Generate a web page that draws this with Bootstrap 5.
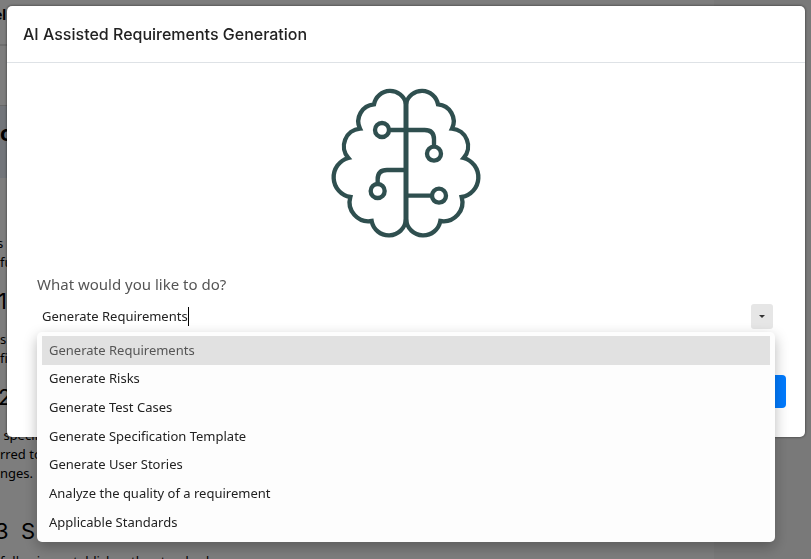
<!DOCTYPE html>
<html lang="en">
<head>
<meta charset="utf-8">
<meta name="viewport" content="width=device-width, initial-scale=1">
<title>AI Assisted Requirements Generation</title>
<link href="https://cdn.jsdelivr.net/npm/bootstrap@5.3.0/dist/css/bootstrap.min.css" rel="stylesheet">
<style>
  body { font-family: "Noto Sans", sans-serif; font-size: 13px; background: #f3f3f3; }
  .doc-page { height: 100vh; color: #000; white-space: nowrap; }
  .doc-column { width: 88%; height: 100%; background: #fbfbfb; }
  .doc-bar { height: 46px; line-height: 30px; font-family: Inter, sans-serif; font-size: 14px; text-indent: -6px; border-bottom: 2px solid #dcdcdc; }
  .doc-gap { height: 60px; border-bottom: 1px solid #d0d0d0; }
  .doc-band { height: 72px; line-height: 54px; background: #e4ebf5; font-family: Inter, sans-serif; font-size: 22px; }
  .doc-links { padding-top: 56px; line-height: 19px; text-indent: -3px; }
  .doc-title { font-family: Inter, sans-serif; font-size: 22px; font-weight: 400; line-height: 24px; margin: 17px 0; text-indent: -2px; }
  .doc-title-major { margin: 36px 0 9px; text-indent: -5px; }
  .doc-text { line-height: 19px; margin: 0; }
  .modal-backdrop { opacity: .5; }
  .ai-modal .modal-dialog { max-width: none; margin: 6px 6px 6px 7px; }
  .ai-modal .modal-content { border: 0; border-radius: 5px; color: #212529; box-shadow: 0 0 3px rgba(0,0,0,.6); }
  .ai-modal .modal-header { padding: 16px; border-color: #dee2e6; }
  .ai-modal .modal-title { font-family: Inter, sans-serif; font-size: 16px; font-weight: 500; line-height: 24px; color: #222; }
  .ai-modal .modal-body { padding: 24px 30px 29px; }
  .brain-icon { width: 172px; height: 170px; margin: -9px auto 24px; }
  .ask-label { font-size: 15px; line-height: 24px; color: #555; }
  .combo-field { height: 32px; padding: 0 2px 0 5px; }
  .combo-field input { width: 146px; border: 0; padding: 0; outline: 0; font-size: 13px; line-height: 24px; color: #222; background: transparent; }
  .text-caret { width: 1px; height: 19px; background: #000; }
  .combo-toggle { width: 22px; height: 25px; padding: 0; border: 0; border-radius: 3px; background: #e6e6e6; }
  .combo-list { position: absolute; top: 100%; left: 0; right: 0; z-index: 2; height: 210px; padding: 4px 5px 5px; border-radius: 5px; background: #fdfdfd; box-shadow: 0 5px 14px rgba(0,0,0,.28); display: grid; grid-auto-rows: 1fr; }
  .combo-list li { padding: 0 7px; color: #222; }
  .combo-list li[aria-selected="true"] { background: #e1e1e1; color: #555; }
  .go-btn { width: 90px; height: 33px; border: 0; border-radius: 4px; background: #007bff; margin: 43px -11px 0 0; }
</style>
<script defer src="https://cdn.jsdelivr.net/npm/bootstrap@5.3.0/dist/js/bootstrap.bundle.min.js"></script>
</head>
<body class="overflow-hidden">
<main class="doc-page overflow-hidden">
  <div class="doc-column">
    <div class="doc-bar fw-bold">el</div>
    <div class="doc-gap"></div>
    <div class="doc-band fw-bold">c</div>
    <div class="doc-links">s<br>fu</div>
    <h2 class="doc-title">1</h2>
    <p class="doc-text">s<br>fi</p>
    <h2 class="doc-title">2</h2>
    <p class="doc-text">&nbsp;specifi<br>rred to<br>nges.</p>
    <h2 class="doc-title doc-title-major">3&nbsp; S</h2>
    <p class="doc-text">following establishes the standard</p>
  </div>
</main>
<div class="modal-backdrop show"></div>
<div class="modal ai-modal d-block" role="dialog" aria-labelledby="aiTitle">
  <div class="modal-dialog">
    <div class="modal-content">
      <div class="modal-header"><h1 class="modal-title" id="aiTitle">AI Assisted Requirements Generation</h1></div>
      <div class="modal-body">
        <svg class="brain-icon d-block" viewBox="0 0 516 510" fill="none" stroke="#2f4f4f" stroke-width="13" aria-hidden="true">
          <g id="half"><path d="M258 77A49 49 0 0 0 162 79A51 51 0 0 0 120 152A53 53 0 0 0 85 240A60 60 0 0 0 91 357A57 57 0 0 0 155 429A52 52 0 0 0 258 425"/></g>
          <use href="#half" transform="matrix(-1 0 0 1 516 0)"/>
          <path d="M258 70V440" stroke-width="15"/>
          <path d="M207 156H314Q342 156 342 184V206M173 318V304Q173 276 201 276H258M258 353H336"/>
          <circle cx="186" cy="156" r="21"/><circle cx="342" cy="227" r="21"/><circle cx="173" cy="339" r="21"/><circle cx="357" cy="353" r="21"/>
        </svg>
        <label class="ask-label d-block mb-1" for="task">What would you like to do?</label>
        <div class="position-relative">
          <div class="combo-field d-flex align-items-center">
            <input id="task" type="text" role="combobox" aria-expanded="true" aria-controls="taskList" value="Generate Requirements">
            <span class="text-caret"></span>
            <button type="button" class="combo-toggle ms-auto d-flex align-items-center justify-content-center" aria-label="Show options"><svg width="6" height="3" viewBox="0 0 6 3"><path d="M0 0H6L3 3Z" fill="#333"/></svg></button>
          </div>
          <ul class="combo-list list-unstyled mb-0" id="taskList" role="listbox">
            <li class="d-flex align-items-center" role="option" aria-selected="true">Generate Requirements</li>
            <li class="d-flex align-items-center" role="option">Generate Risks</li>
            <li class="d-flex align-items-center" role="option">Generate Test Cases</li>
            <li class="d-flex align-items-center" role="option">Generate Specification Template</li>
            <li class="d-flex align-items-center" role="option">Generate User Stories</li>
            <li class="d-flex align-items-center" role="option">Analyze the quality of a requirement</li>
            <li class="d-flex align-items-center" role="option">Applicable Standards</li>
          </ul>
        </div>
        <div class="d-flex justify-content-end"><button type="button" class="go-btn btn btn-primary" aria-label="Submit"></button></div>
      </div>
    </div>
  </div>
</div>
</body>
</html>
